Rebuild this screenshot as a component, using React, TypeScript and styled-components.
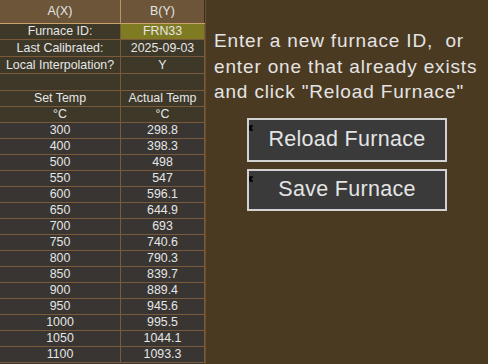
import styled, { createGlobalStyle } from "styled-components";

const GlobalStyle = createGlobalStyle`
  *, *::before, *::after {
    box-sizing: border-box;
  }
  html, body {
    margin: 0;
    padding: 0;
    background: #4b3a22;
  }
  body {
    font-family: "Liberation Sans", Arial, sans-serif;
    color: #e6e6e6;
    overflow: hidden;
  }
`;

const Page = styled.div`
  display: flex;
  width: 488px;
  height: 364px;
  overflow: hidden;
  background: #4b3a22;
`;

const Sheet = styled.div`
  display: flex;
  flex-direction: column;
  width: 205px;
  flex: none;
  background: #383532;
`;

type RowProps = { $h: number; $bg: string; $line: string };

const Row = styled.div<RowProps>`
  display: grid;
  grid-template-columns: 121px 84px;
  height: ${(p) => p.$h}px;
  background: ${(p) => p.$bg};
  border-bottom: 1px solid ${(p) => p.$line};
  flex: none;
`;

type CellProps = { $fill?: string; $edge?: string };

const Cell = styled.div<CellProps>`
  display: flex;
  align-items: center;
  justify-content: center;
  border-right: 1px solid ${(p) => p.$edge || "#7b5a3c"};
  background: ${(p) => p.$fill || "transparent"};
  font-size: 12.4px;
  line-height: 1;
  color: #e6e6e6;
  white-space: nowrap;
  overflow: hidden;
`;

const Panel = styled.div`
  flex: 1;
  display: flex;
  flex-direction: column;
  align-items: center;
  padding: 28px 0 0 8px;
  border-left: 1px solid #6a4e30;
`;

const Prompt = styled.p`
  margin: 0 0 13px;
  align-self: flex-start;
  font-size: 19px;
  line-height: 25.5px;
  letter-spacing: 0.85px;
  color: #e4e4e4;
  white-space: pre;
`;

const Button = styled.button<{ $h: number }>`
  position: relative;
  width: 200px;
  height: ${(p) => p.$h}px;
  margin: 0 0 7px -8px;
  background: #3a3a3a;
  border: 2px solid #d2d2d2;
  color: #e4e4e4;
  font-family: "Liberation Sans", Arial, sans-serif;
  font-size: 21.5px;
  letter-spacing: 0.3px;
  padding: 0;
  cursor: pointer;
`;

const Marker = styled.svg`
  position: absolute;
  left: 0;
  top: 5px;
`;

const top = [
  { a: "Furnace ID:", b: "FRN33", h: 16, fill: "#7f7b22" },
  { a: "Last Calibrated:", b: "2025-09-03", h: 17 },
  { a: "Local Interpolation?", b: "Y", h: 17 },
  { a: "", b: "", h: 17 },
  { a: "Set Temp", b: "Actual Temp", h: 16 },
  { a: "°C", b: "°C", h: 16 },
];

const data: [string, string][] = [
  ["300", "298.8"],
  ["400", "398.3"],
  ["500", "498"],
  ["550", "547"],
  ["600", "596.1"],
  ["650", "644.9"],
  ["700", "693"],
  ["750", "740.6"],
  ["800", "790.3"],
  ["850", "839.7"],
  ["900", "889.4"],
  ["950", "945.6"],
  ["1000", "995.5"],
  ["1050", "1044.1"],
  ["1100", "1093.3"],
];

const Mark = () => (
  <Marker width="5" height="6" viewBox="0 0 5 6">
    <path d="M4 1H1V5H4M0 3H3" stroke="#000" strokeWidth="1.4" fill="none" />
  </Marker>
);

export default function App() {
  return (
    <>
      <GlobalStyle />
      <Page>
        <Sheet>
          <Row $h={24} $bg="#6c5538" $line="#c9a26c">
            <Cell $edge="#b8946a">A(X)</Cell>
            <Cell $edge="#3b2e1e">B(Y)</Cell>
          </Row>
          {top.map((r, i) => (
            <Row key={i} $h={r.h} $bg="#3d3828" $line="#7b5a3c">
              <Cell>{r.a}</Cell>
              <Cell $fill={r.fill}>{r.b}</Cell>
            </Row>
          ))}
          {data.map(([a, b]) => (
            <Row key={a} $h={16} $bg="#383532" $line="#7b5a3c">
              <Cell>{a}</Cell>
              <Cell>{b}</Cell>
            </Row>
          ))}
        </Sheet>
        <Panel>
          <Prompt>
            {"Enter a new furnace ID,  or\nenter one that already exists\nand click \"Reload Furnace\""}
          </Prompt>
          <Button $h={44}>
            <Mark />
            Reload Furnace
          </Button>
          <Button $h={42}>
            <Mark />
            Save Furnace
          </Button>
        </Panel>
      </Page>
    </>
  );
}
